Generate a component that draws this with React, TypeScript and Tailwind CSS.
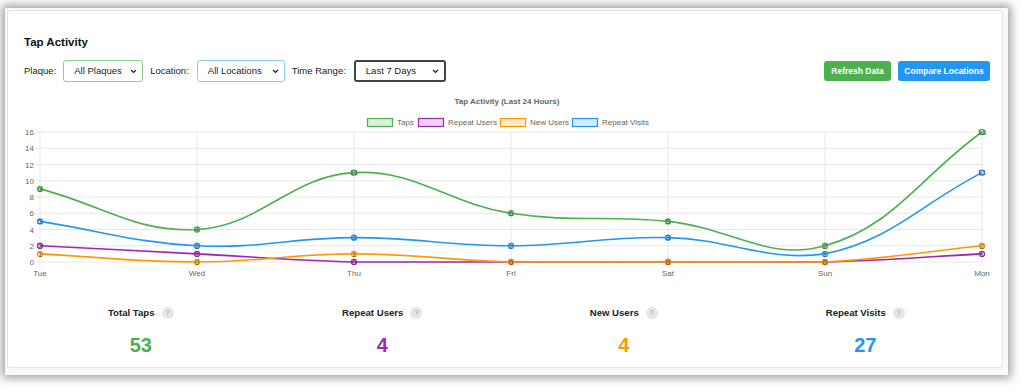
import React from 'react'

type Pt = { x: number; y: number }

const days = ['Tue', 'Wed', 'Thu', 'Fri', 'Sat', 'Sun', 'Mon']
const X0 = 40
const X1 = 982
const Y0 = 262
const Y1 = 132
const xs = days.map((_, i) => X0 + ((X1 - X0) / 6) * i)
const yOf = (v: number) => Y0 - (v * (Y0 - Y1)) / 16

const series = [
  { label: 'Taps', color: '#4caf50', fill: 'rgba(76,175,80,0.2)', data: [9, 4, 11, 6, 5, 2, 16] },
  { label: 'Repeat Users', color: '#9c27b0', fill: 'rgba(156,39,176,0.2)', data: [2, 1, 0, 0, 0, 0, 1] },
  { label: 'New Users', color: '#ff9800', fill: 'rgba(255,152,0,0.2)', data: [1, 0, 1, 0, 0, 0, 2] },
  { label: 'Repeat Visits', color: '#2196f3', fill: 'rgba(33,150,243,0.2)', data: [5, 2, 3, 2, 3, 1, 11] },
]

const clamp = (v: number, a: number, b: number) => Math.max(a, Math.min(b, v))

// chart.js style spline, tension 0.4, control points capped to the chart area
function curve(pts: Pt[]) {
  const t = 0.4
  const ctrl = pts.map((cur, i) => {
    const prev = pts[i - 1] ?? cur
    const next = pts[i + 1] ?? cur
    const d01 = Math.hypot(cur.x - prev.x, cur.y - prev.y)
    const d12 = Math.hypot(next.x - cur.x, next.y - cur.y)
    let s01 = d01 / (d01 + d12)
    let s12 = d12 / (d01 + d12)
    if (isNaN(s01)) s01 = 0
    if (isNaN(s12)) s12 = 0
    const fa = t * s01
    const fb = t * s12
    return {
      p: { x: clamp(cur.x - fa * (next.x - prev.x), X0, X1), y: clamp(cur.y - fa * (next.y - prev.y), Y1, Y0) },
      n: { x: clamp(cur.x + fb * (next.x - prev.x), X0, X1), y: clamp(cur.y + fb * (next.y - prev.y), Y1, Y0) },
    }
  })
  let d = `M${pts[0].x},${pts[0].y}`
  for (let i = 1; i < pts.length; i++) {
    const a = ctrl[i - 1].n
    const b = ctrl[i].p
    d += ` C${a.x},${a.y} ${b.x},${b.y} ${pts[i].x},${pts[i].y}`
  }
  return d
}

const Chevron = () => (
  <svg width="7" height="5" viewBox="0 0 7 5" className="ml-auto">
    <path d="M1 1l2.5 2.5L6 1" fill="none" stroke="#222" strokeWidth="1.2" />
  </svg>
)

const Select = ({ value, width, border }: { value: string; width: string; border: string }) => (
  <div className={`flex items-center h-[22px] rounded-[3px] pl-[10px] pr-[5px] text-[9.5px] text-[#222] bg-white ${width} ${border}`}>
    <span>{value}</span>
    <Chevron />
  </div>
)

const Chart = () => {
  const ticks = [0, 2, 4, 6, 8, 10, 12, 14, 16]
  const legend = [
    { x: 367, lx: 397 },
    { x: 418, lx: 448 },
    { x: 500, lx: 530 },
    { x: 572, lx: 602 },
  ]
  return (
    <svg width="966" height="190" viewBox="24 92 966 190" className="block">
      <text x="507" y="104" textAnchor="middle" fontSize="8" fontWeight="bold" fill="#666">
        Tap Activity (Last 24 Hours)
      </text>
      {series.map((s, i) => (
        <g key={s.label}>
          <rect x={legend[i].x + 0.5} y="118.5" width="25" height="8" fill={s.fill} stroke={s.color} strokeWidth="1.2" />
          <text x={legend[i].lx} y="125" fontSize="8" fill="#666">
            {s.label}
          </text>
        </g>
      ))}
      {ticks.map((v) => (
        <g key={v}>
          <line x1="36" x2={X1} y1={yOf(v)} y2={yOf(v)} stroke="#e8e8e8" strokeWidth="1" />
          <text x="34" y={yOf(v) + 3} textAnchor="end" fontSize="8" fill="#666">
            {v}
          </text>
        </g>
      ))}
      {xs.map((x, i) => (
        <g key={days[i]}>
          <line x1={x} x2={x} y1={Y1} y2={Y0 + 4} stroke="#e8e8e8" strokeWidth="1" />
          <text x={x} y="276" textAnchor="middle" fontSize="8" fill="#666">
            {days[i]}
          </text>
        </g>
      ))}
      {series.map((s) => {
        const pts = s.data.map((v, i) => ({ x: xs[i], y: yOf(v) }))
        return (
          <g key={s.label}>
            <path d={curve(pts)} fill="none" stroke={s.color} strokeWidth="1.6" />
            {pts.map((p, i) => (
              <g key={i}>
                <circle cx={p.x} cy={p.y} r="2.6" fill={s.fill} stroke={s.color} strokeWidth="1.2" />
                <text x={p.x} y={p.y + 2.8} textAnchor="middle" fontSize="8" fill="#444" fillOpacity="0.85">
                  {s.data[i]}
                </text>
              </g>
            ))}
          </g>
        )
      })}
    </svg>
  )
}

const Stat = ({ label, value, color }: { label: string; value: number; color: string }) => (
  <div className="flex flex-col items-center">
    <div className="flex items-center gap-[7px] h-[14px]">
      <span className="text-[9.6px] font-bold text-[#222]">{label}</span>
      <span className="flex items-center justify-center w-[12px] h-[12px] rounded-full bg-[#e6e6e6] text-[7px] text-[#999]">?</span>
    </div>
    <div className={`mt-[13px] text-[20px] leading-[24px] font-bold ${color}`}>{value}</div>
  </div>
)

export default function App() {
  return (
    <div className="w-[1024px] h-[391px] bg-white overflow-hidden pt-[8px] pl-[5px] font-['Liberation_Sans',Arial,sans-serif]">
      <div className="w-[1003px] h-[367px] bg-[#f9f9f9] shadow-[0_0_9px_3px_rgba(0,0,0,0.38)] pt-[2px] pl-[2px]">
        <div className="w-[996px] h-[358px] bg-white border border-[#e2e2e2] rounded-[3px] pt-[24px] pl-[16px] pr-[12px]">
          <h2 className="text-[11.5px] leading-[14px] font-bold text-[#111]">Tap Activity</h2>
          <div className="mt-[11px] flex items-center text-[9.5px] text-[#222]">
            <span className="mr-[7px]">Plaque:</span>
            <Select value="All Plaques" width="w-[80px]" border="border border-[#8fd18f]" />
            <span className="ml-[7px] mr-[8px]">Location:</span>
            <Select value="All Locations" width="w-[88px]" border="border border-[#90c8f5]" />
            <span className="ml-[7px] mr-[8px]">Time Range:</span>
            <Select value="Last 7 Days" width="w-[92px]" border="border-2 border-[#444]" />
            <button className="ml-auto h-[20px] w-[67px] rounded-[3px] bg-[#4caf50] text-white text-[8.5px] font-bold">
              Refresh Data
            </button>
            <button className="ml-[7px] h-[20px] w-[92px] rounded-[3px] bg-[#2196f3] text-white text-[8.5px] font-bold">
              Compare Locations
            </button>
          </div>
          <div className="mt-[10px]">
            <Chart />
          </div>
          <div className="mt-[24px] grid grid-cols-4 w-[966px] -ml-[4px]">
            <Stat label="Total Taps" value={53} color="text-[#4caf50]" />
            <Stat label="Repeat Users" value={4} color="text-[#9c27b0]" />
            <Stat label="New Users" value={4} color="text-[#ff9800]" />
            <Stat label="Repeat Visits" value={27} color="text-[#2196f3]" />
          </div>
        </div>
      </div>
    </div>
  )
}
